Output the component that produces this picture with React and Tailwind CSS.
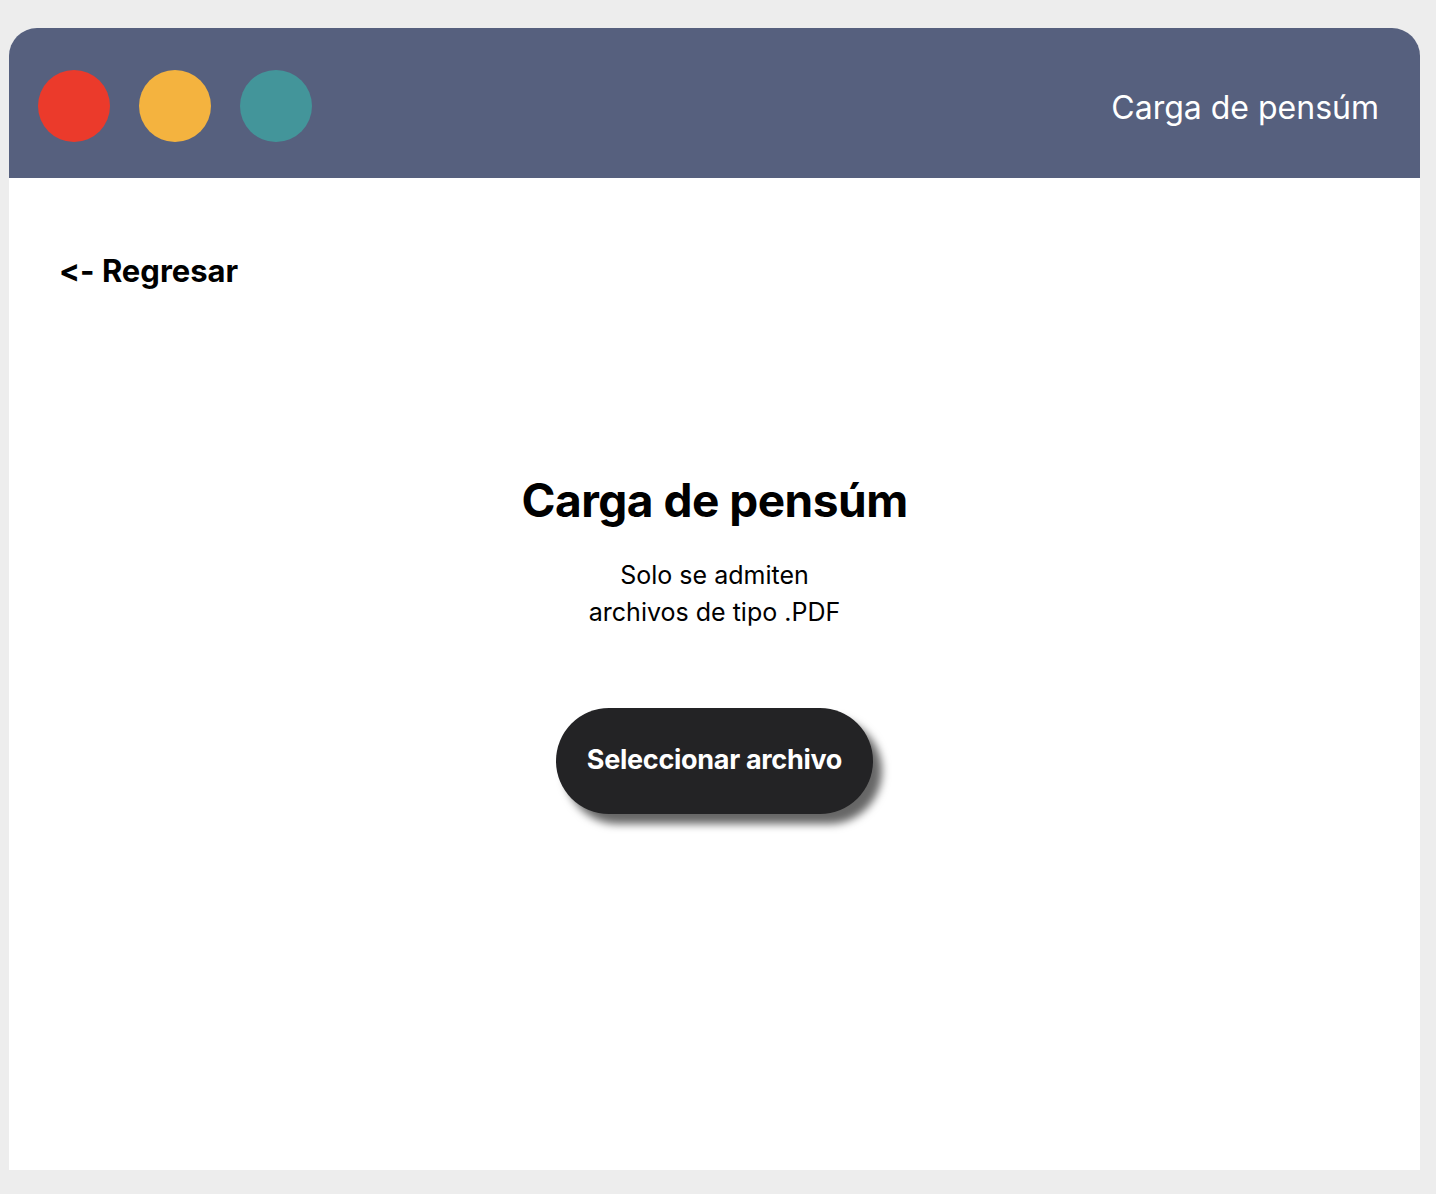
export default function App() {
  return (
    <div className="min-h-[1194px] bg-[#ededed] pt-[28px] pl-[9px] pr-[16px] pb-[24px]" style={{ fontFamily: 'Inter, "Noto Sans", sans-serif' }}>
      <div className="flex h-[1142px] w-[1411px] flex-col bg-white rounded-t-[28px] overflow-hidden">
        <header className="flex h-[150px] items-center justify-between bg-[#56607e] pt-[6px] pl-[29px] pr-[41px]">
          <div className="flex items-center gap-[29px]">
            <span className="h-[72px] w-[72px] rounded-full bg-[#eb3a2b]" />
            <span className="h-[72px] w-[72px] rounded-full bg-[#f4b33f]" />
            <span className="h-[72px] w-[72px] rounded-full bg-[#43959a]" />
          </div>
          <h2 className="pt-[3px] text-[32px] font-normal tracking-[0px] text-white">Carga de pensúm</h2>
        </header>

        <main className="flex flex-1 flex-col px-[50px] pt-[70px]">
          <button className="self-start text-[31px] font-bold tracking-[0px] text-black [font-feature-settings:'calt'_0,'liga'_0]">
            &lt;- Regresar
          </button>

          <div className="mt-[180px] flex flex-col items-center text-center">
            <h1 className="text-[46px] font-bold leading-[50px] tracking-[-0.5px] text-black">Carga de pensúm</h1>
            <p className="mt-[32px] text-[25px] leading-[37px] text-black">
              Solo se admiten
              <br />
              archivos de tipo .PDF
            </p>
            <button className="mt-[77px] h-[106px] w-[317px] rounded-full bg-[#232325] text-[27px] font-bold tracking-[-0.3px] text-white shadow-[9px_10px_9px_rgba(0,0,0,0.6)]">
              Seleccionar archivo
            </button>
          </div>
        </main>
      </div>
    </div>
  )
}
